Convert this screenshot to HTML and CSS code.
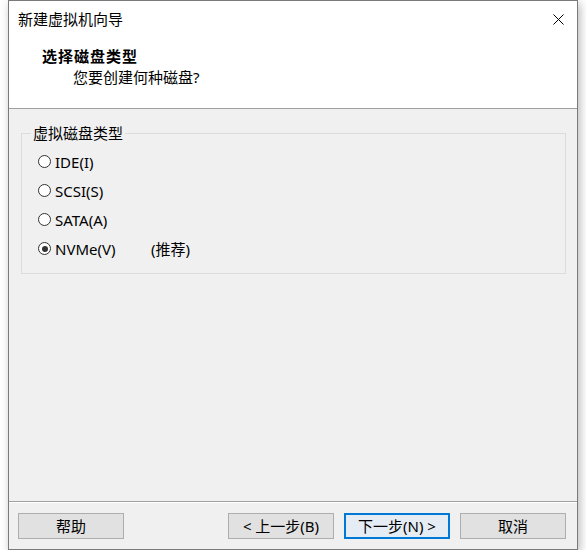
FILE: index.html
```html
<!DOCTYPE html>
<html lang="zh-CN">
<head>
<meta charset="utf-8">
<title>新建虚拟机向导</title>
<link rel="stylesheet" href="styles.css">
</head>
<body>
<div class="window">
  <div class="top">
    <div class="titlebar">
      <span class="title">新建虚拟机向导</span>
      <svg class="close" width="11" height="11" viewBox="0 0 11 11"><path d="M0.5 0.5 L10.5 10.5 M10.5 0.5 L0.5 10.5" stroke="#000" stroke-width="1" fill="none"/></svg>
    </div>
    <div class="heading">选择磁盘类型</div>
    <div class="subtitle">您要创建何种磁盘?</div>
  </div>
  <div class="body">
    <fieldset class="group">
      <legend class="legend">虚拟磁盘类型</legend>
      <div class="row"><span class="radio"></span><span class="label">IDE(I)</span></div>
      <div class="row"><span class="radio"></span><span class="label">SCSI(S)</span></div>
      <div class="row"><span class="radio"></span><span class="label">SATA(A)</span></div>
      <div class="row"><span class="radio checked"></span><span class="label wide">NVMe(V)</span><span class="label">(推荐)</span></div>
    </fieldset>
  </div>
  <div class="footer">
    <button class="btn">帮助</button>
    <div class="spacer"></div>
    <button class="btn">&lt; 上一步(B)</button>
    <button class="btn primary">下一步(N) &gt;</button>
    <button class="btn">取消</button>
  </div>
</div>
</body>
</html>
```
FILE: styles.css
```css
html, body {
  margin: 0;
  padding: 0;
  background: #ffffff;
}
body {
  font-family: "Noto Sans", "Noto Sans CJK SC", sans-serif;
  font-size: 15px;
  color: #000;
}
.window {
  margin-left: 8px;
  width: 568px;
  height: 548px;
  border: 1px solid #7a7a7a;
  background: #f0f0f0;
  display: flex;
  flex-direction: column;
  box-shadow: 2px 3px 9px rgba(0, 0, 0, 0.28);
}
.top {
  background: #ffffff;
  height: 107px;
  border-bottom: 1px solid #a0a0a0;
  flex: none;
}
.titlebar {
  height: 36px;
  display: flex;
  align-items: center;
  justify-content: space-between;
  padding: 0 13px 0 9px;
}
.title {
  font-size: 15px;
  line-height: 36px;
}
.close {
  display: block;
}
.heading {
  margin-top: 9px;
  padding-left: 33px;
  font-weight: bold;
  font-size: 15px;
  letter-spacing: 1px;
  line-height: 20px;
}
.subtitle {
  margin-top: 1px;
  padding-left: 64px;
  font-size: 15px;
  line-height: 20px;
}
.body {
  flex: 1;
  padding: 14px 11px 0 12px;
}
.group {
  margin: 0;
  border: 1px solid #dcdcdc;
  padding: 4px 0 10px 16px;
}
.legend {
  margin-left: -7px;
  padding: 0 2px;
  line-height: 20px;
  font-size: 15px;
}
.row {
  height: 29px;
  display: flex;
  align-items: center;
}
.radio {
  width: 11px;
  height: 11px;
  border: 1px solid #333;
  border-radius: 50%;
  background: #fff;
  margin-right: 4px;
  position: relative;
  flex: none;
}
.radio.checked::after {
  content: "";
  position: absolute;
  left: 2.5px;
  top: 2.5px;
  width: 6px;
  height: 6px;
  border-radius: 50%;
  background: #333;
}
.label {
  font-size: 15px;
  line-height: 20px;
}
.wide {
  display: inline-block;
  width: 96px;
}
.footer {
  flex: none;
  border-top: 1px solid #a0a0a0;
  box-shadow: inset 0 1px #ffffff;
  padding: 11px 11px 10px 9px;
  display: flex;
  gap: 10px;
}
.spacer {
  flex: 1;
}
.btn {
  width: 106px;
  height: 26px;
  border: 1px solid #adadad;
  background: #e1e1e1;
  font-family: "Noto Sans", "Noto Sans CJK SC", sans-serif;
  font-size: 15px;
  color: #000;
  padding: 0;
  margin: 0;
  line-height: 22px;
}
.btn.primary {
  border: 2px solid #0078d7;
  background: #e5ecf4;
}
```
